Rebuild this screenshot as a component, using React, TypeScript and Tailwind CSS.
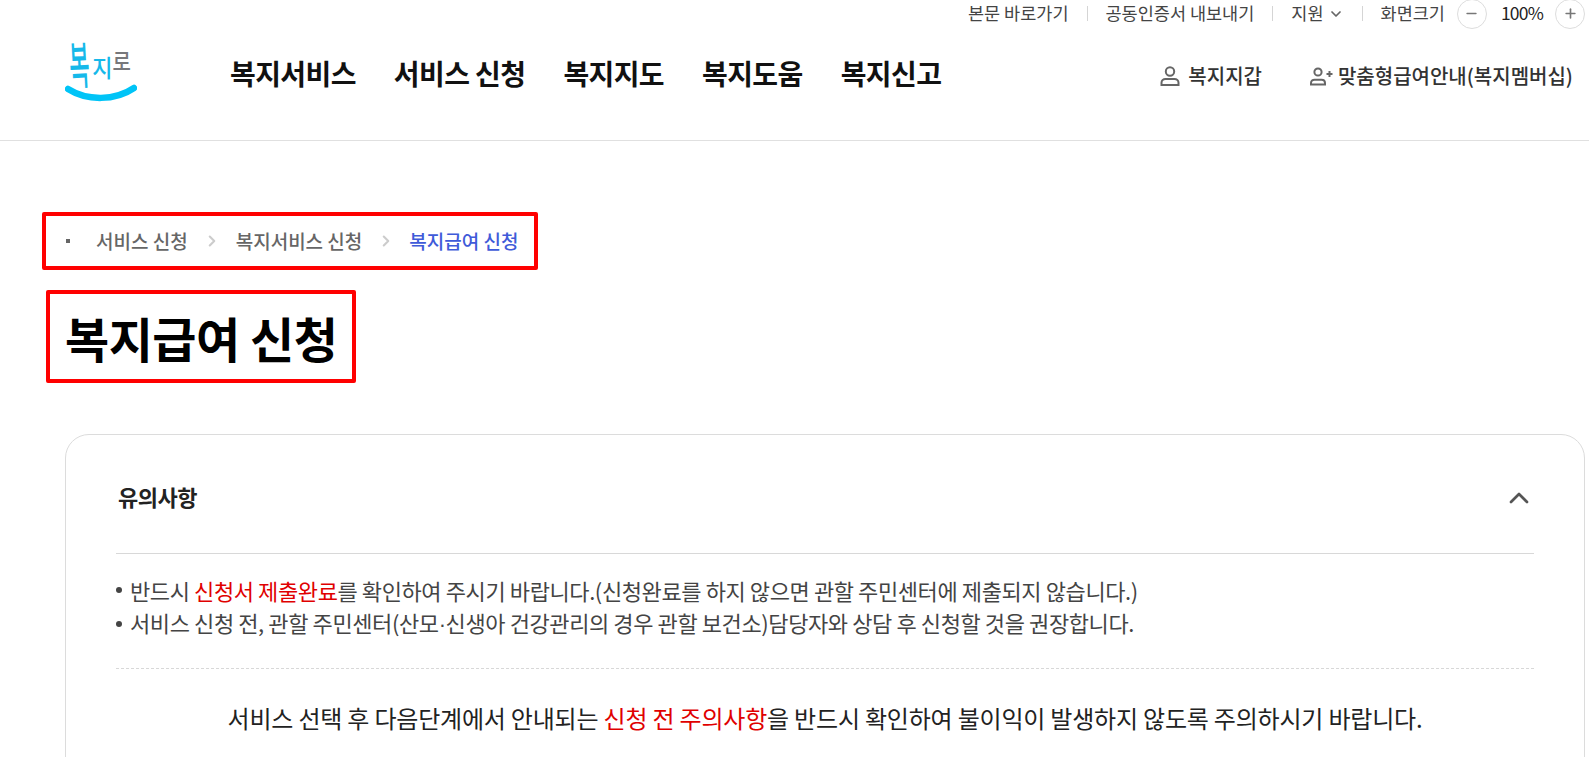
import { ChevronDown, ChevronRight, ChevronUp, Minus, Plus } from "lucide-react";

const kr = "font-['Noto_Sans_CJK_KR','Noto_Sans_KR',sans-serif]";

const mainMenu = ["복지서비스", "서비스 신청", "복지지도", "복지도움", "복지신고"];

const Divider = () => <span className="w-px h-[15px] bg-[#d5d5d5]" />;

const UserIcon = ({ plus }: { plus?: boolean }) => (
  <svg width={plus ? 24 : 22} height="22" viewBox={plus ? "0 0 24 22" : "0 0 22 22"} fill="none" stroke="#666" strokeWidth="2">
    <circle cx={plus ? 9 : 11} cy={plus ? 7 : 6.5} r={plus ? 3.6 : 4.2} />
    {plus ? (
      <path d="M2 19.5v-1.5c0-2 1.6-3.3 3.5-3.3h7c1.9 0 3.5 1.3 3.5 3.3v1.5z" />
    ) : (
      <path d="M2.5 20v-2.2c0-2.3 1.8-3.8 4-3.8h9c2.2 0 4 1.5 4 3.8V20z" />
    )}
    {plus && <path d="M17.5 9h6M20.5 6v6" />}
  </svg>
);

const Logo = () => (
  <div className="relative w-[72px] h-[64px]">
    <div className="flex items-start text-[#16b9ea] font-medium leading-none">
      <span className="ml-[4px] mt-[9px] text-[22px] scale-y-[2.3] -rotate-3">복</span>
      <span className="ml-[3px] mt-[14px] text-[22px] scale-y-[1.1]">지</span>
      <span className="mt-[10px] text-[20px] scale-y-[1.15] text-[#77787b]">로</span>
    </div>
    <svg className="absolute left-0 top-[40px]" width="72" height="24" viewBox="0 0 72 24" fill="none">
      <path d="M3 8C22 20 50 20 69 7" stroke="#00c4f7" strokeWidth="6.5" strokeLinecap="round" />
    </svg>
  </div>
);

export default function App() {
  return (
    <div className={`${kr} w-[1589px] h-[757px] overflow-hidden bg-white text-[#111]`}>
      <header className="h-[141px] border-b border-[#e0e0e0]">
        <div className="h-[27px] flex items-center justify-end gap-[18px] pr-[4px] text-[17.5px] text-[#444]">
          <span>본문 바로가기</span>
          <Divider />
          <span>공동인증서 내보내기</span>
          <Divider />
          <span className="flex items-center gap-1">
            지원
            <ChevronDown size={16} strokeWidth={2.6} className="text-[#666]" />
          </span>
          <Divider />
          <div className="flex items-center gap-3">
            <span>화면크기</span>
            <button className="w-[30px] h-[30px] rounded-full border border-[#ddd] flex items-center justify-center">
              <Minus size={15} strokeWidth={2.6} className="text-[#777]" />
            </button>
            <span className="ml-[2px] text-[#222] tracking-[-0.8px]">100%</span>
            <button className="w-[30px] h-[30px] rounded-full border border-[#ddd] flex items-center justify-center">
              <Plus size={15} strokeWidth={2.6} className="text-[#777]" />
            </button>
          </div>
        </div>
        <div className="flex items-start pl-[65px] pr-[16px]">
          <div className="mt-[14px]">
            <Logo />
          </div>
          <nav className="ml-[93px] mt-[28px] flex gap-[38px] text-[28px] font-bold text-[#111] leading-[36px] tracking-[-0.6px]">
            {mainMenu.map((item) => (
              <span key={item}>{item}</span>
            ))}
          </nav>
          <div className="ml-auto mt-[36px] flex gap-[47px] text-[20px] font-medium text-[#333] leading-[26px]">
            <span className="flex items-center gap-[7px]">
              <UserIcon />
              복지지갑
            </span>
            <span className="flex items-center gap-[5px]">
              <UserIcon plus />
              맞춤형급여안내(복지멤버십)
            </span>
          </div>
        </div>
      </header>

      <main className="pl-[42px]">
        <div className="mt-[71px] w-[496px] h-[58px] border-4 border-[#f00] rounded-[2px] flex items-center pl-[20px] text-[19px] font-medium text-[#666]">
          <span className="w-1 h-1 bg-[#666] mr-[26px]" />
          <span>서비스 신청</span>
          <ChevronRight size={18} strokeWidth={2.8} className="text-[#ccc] mx-[15px]" />
          <span>복지서비스 신청</span>
          <ChevronRight size={18} strokeWidth={2.8} className="text-[#ccc] ml-[15px] mr-[14px]" />
          <span className="text-[#3f5bd9]">복지급여 신청</span>
        </div>
        <div className="mt-[20px] ml-[4px] w-[310px] h-[93px] border-4 border-[#f00] rounded-[2px] flex items-center pl-[15px]">
          <h1 className="text-[48px] font-bold text-black tracking-[-0.5px] leading-none">복지급여 신청</h1>
        </div>

        <section className="mt-[51px] ml-[23px] w-[1520px] h-[400px] border border-[#dcdcdc] rounded-t-[24px] px-[50px]">
          <div className="h-[119px] border-b border-[#d8d8d8] flex items-center justify-between pt-[4px]">
            <h2 className="text-[22px] font-bold text-[#222] tracking-[-0.5px] pl-[2px]">유의사항</h2>
            <ChevronUp size={32} strokeWidth={2} className="text-[#555] -mr-[1px] mt-[4px]" />
          </div>
          <ul className="pt-[20px] pb-[27px] border-b border-dashed border-[#d8d8d8] text-[22px] leading-[32px] text-[#444] tracking-[-0.4px]">
            <li className="flex items-center gap-[8px]">
              <span className="w-[6px] h-[6px] rounded-full bg-[#444]" />
              <span>
                반드시 <span className="text-[#e00000]">신청서 제출완료</span>를 확인하여 주시기 바랍니다.(신청완료를 하지 않으면 관할 주민센터에 제출되지 않습니다.)
              </span>
            </li>
            <li className="flex items-center gap-[8px]">
              <span className="w-[6px] h-[6px] rounded-full bg-[#444]" />
              <span>
                서비스 신청 전, 관할 주민센터(산모<span className="font-['Liberation_Sans']">·</span>신생아 건강관리의 경우 관할 보건소)담당자와 상담 후 신청할 것을 권장합니다.
              </span>
            </li>
          </ul>
          <p className="pt-[31px] text-center text-[24px] leading-[36px] text-[#222] tracking-[-0.2px]">
            서비스 선택 후 다음단계에서 안내되는 <span className="text-[#e00000]">신청 전 주의사항</span>을 반드시 확인하여 불이익이 발생하지 않도록 주의하시기 바랍니다.
          </p>
        </section>
      </main>
    </div>
  );
}
